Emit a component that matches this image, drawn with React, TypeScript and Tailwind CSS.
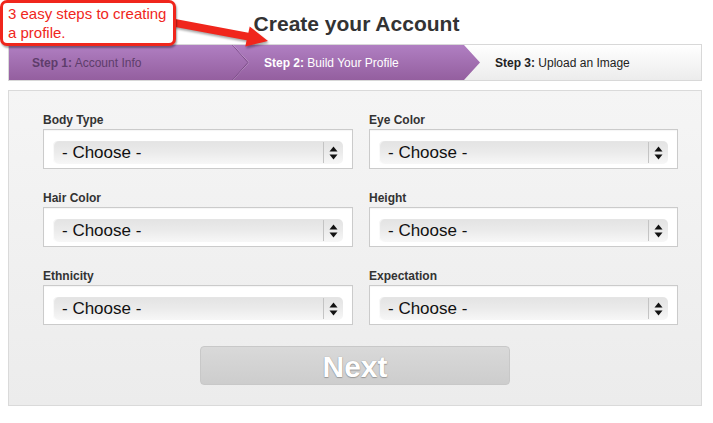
import React from 'react';

const fields = [
  ['Body Type', 'Eye Color'],
  ['Hair Color', 'Height'],
  ['Ethnicity', 'Expectation'],
];

// Fake select box, styled like the old Safari/Mac popup
function ChooseBox({ label }: { label: string }) {
  return (
    <div className="flex flex-col">
      <label className="mb-[2px] h-[14px] text-[12px] font-bold leading-[14px] text-[#333]">{label}</label>
      <div className="flex h-[40px] items-start border border-[#cbcbcb] bg-white pl-[9px] pr-[9px] pt-[11px] shadow-[inset_0_1px_1px_rgba(0,0,0,0.04)]">
        <div className="flex h-[23px] flex-1 items-center rounded-[5px] bg-gradient-to-b from-[#e3e3e3] via-[#ebebeb] to-[#f7f7f7] shadow-[inset_1px_0_1px_rgba(255,255,255,0.8)]">
          <span className="flex-1 pl-[9px] text-[17px] leading-[23px] text-[#111]">- Choose -</span>
          <div className="flex h-[21px] w-[20px] items-center justify-center border-l border-[#c4c4c4]">
            <svg width="9" height="14" viewBox="0 0 9 14">
              <path d="M4.5 0.5 L8.5 5.5 L0.5 5.5 Z" fill="#111" />
              <path d="M0.5 8.5 L8.5 8.5 L4.5 13.5 Z" fill="#111" />
            </svg>
          </div>
        </div>
      </div>
    </div>
  );
}

export default function App() {
  return (
    <div className="relative h-[423px] w-[713px] overflow-hidden bg-white font-['Liberation_Sans',Arial,sans-serif]">
      {/* title */}
      <div className="flex h-[44px] items-center justify-center pt-[3px]">
        <h1 className="text-[21px] font-bold text-[#333]">Create your Account</h1>
      </div>

      {/* steps */}
      <div className="ml-2 flex h-[37px] w-[694px] border border-[#d8d8d8] bg-gradient-to-b from-white to-[#ececec] text-[12px]">
        <div className="relative flex w-[240px] items-center bg-gradient-to-b from-[#b07fc2] to-[#945f9f] pl-[23px] text-[#5e3d6b] [clip-path:polygon(0_0,224px_0,240px_50%,224px_100%,0_100%)]">
          <span><b>Step 1:</b> Account Info</span>
          <svg className="absolute right-0 top-0" width="17" height="35" viewBox="0 0 17 35">
            <path d="M0.5 0 L16 17.5 L0.5 35" fill="none" stroke="#7c4c89" strokeWidth="1" />
          </svg>
        </div>
        <div className="-ml-[16px] flex w-[247px] items-center bg-gradient-to-b from-[#b07fc2] to-[#945f9f] pl-[31px] text-white [clip-path:polygon(0_0,231px_0,247px_50%,231px_100%,0_100%,16px_50%)]">
          <span><b>Step 2:</b> Build Your Profile</span>
        </div>
        <div className="flex flex-1 items-center pl-[15px] text-[#222]">
          <span><b>Step 3:</b> Upload an Image</span>
        </div>
      </div>

      {/* form panel */}
      <div className="ml-2 mt-[9px] flex h-[316px] w-[694px] flex-col border border-[#dadada] bg-gradient-to-b from-[#f5f5f5] to-[#ececec] pl-[34px] pt-[22px]">
        <div className="grid w-[635px] grid-cols-[310px_309px] gap-x-[16px] gap-y-[22px]">
          {fields.flat().map((f) => (
            <ChooseBox key={f} label={f} />
          ))}
        </div>
        <div className="mt-[21px] flex w-[624px] justify-center">
          <button className="h-[39px] w-[310px] rounded-[4px] border border-[#c8c8c8] bg-gradient-to-b from-[#d9d9d9] to-[#cdcdcd] text-[30px] font-bold leading-[40px] text-white [text-shadow:0_0_1px_#8a8a8a,0_1px_1px_#9a9a9a]">
            Next
          </button>
        </div>
      </div>

      {/* red callout annotation */}
      <svg className="absolute left-0 top-0 drop-shadow-[1px_2px_1px_rgba(0,0,0,0.35)]" width="280" height="52" viewBox="0 0 280 52">
        <polygon
          points="170,18 170,26 246.6,40.3 245.3,46.5 268,41 249.7,26.5 248.4,32.7"
          fill="#f0261c"
        />
      </svg>
      <div className="absolute left-0 top-0 h-[46px] w-[176px] rounded-[7px] border-[3px] border-[#f0261c] bg-white pl-[5px] pt-[1px] text-[15px] leading-[19px] text-[#f0261c] shadow-[1px_2px_2px_rgba(0,0,0,0.35)]">
        3 easy steps to creating
        <br />
        a profile.
      </div>
    </div>
  );
}
